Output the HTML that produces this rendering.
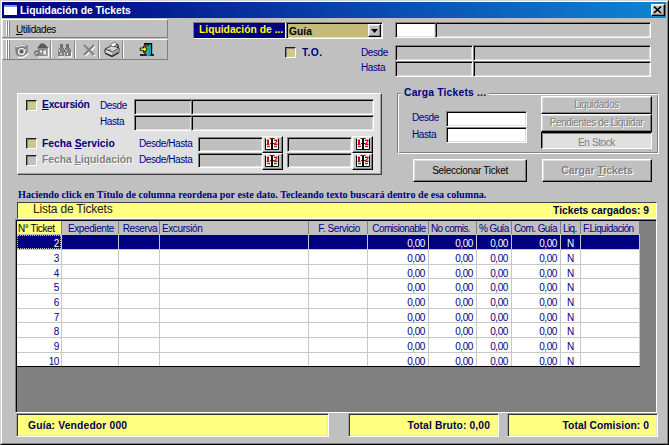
<!DOCTYPE html>
<html><head><meta charset="utf-8">
<style>
*{margin:0;padding:0;box-sizing:border-box}
html,body{width:669px;height:445px;overflow:hidden;background:#c0c0c0;font-family:"Liberation Sans",sans-serif;font-size:10px;letter-spacing:-0.4px;color:#000}
.a{position:absolute}
.t{position:absolute;white-space:nowrap;line-height:12px}
.sunk{position:absolute;border:1px solid;border-color:#808080 #fff #fff #808080;box-shadow:inset 1px 1px #000,inset -1px -1px #dfdfdf;background:#c0c0c0}
.rais{position:absolute;border:1px solid;border-color:#fff #000 #000 #fff;box-shadow:inset -1px -1px #808080,inset 1px 1px #dfdfdf;background:#c0c0c0}
.nv{color:#000080}
.b{font-weight:bold;font-size:10.3px;letter-spacing:0}
.dis{color:#808080;text-shadow:1px 1px #fff}
.chk{position:absolute;width:11px;height:11px;border:1px solid;border-color:#202020 #fff #fff #202020;box-shadow:inset 1px 1px #808080;background:#cfc88c}
.bt{position:absolute;border:1px solid;border-color:#fff #000 #000 #fff;box-shadow:inset -1px -1px #808080,inset 1px 1px #dfdfdf;background:#c0c0c0;text-align:center}
</style></head><body>
<!-- window frame -->
<div class="a" style="left:0;top:0;width:669px;height:445px;border:1px solid;border-color:#d4d4d4 #000 #000 #d4d4d4"></div>
<div class="a" style="left:1px;top:1px;width:667px;height:443px;border:1px solid;border-color:#fff #808080 #808080 #fff"></div>
<!-- title bar -->
<div class="a" style="left:2px;top:2px;width:664px;height:16px;background:linear-gradient(to right,#000080,#1084d0)"></div>
<div class="a" style="left:4px;top:5px;width:13px;height:10px;background:#fff;border-top:2px solid #6aa0e0"></div>
<div class="t b" style="left:20px;top:5px;color:#fff">Liquidación de Tickets</div>
<div class="rais" style="left:651px;top:4px;width:14px;height:12px"></div>
<svg class="a" style="left:651px;top:4px" width="14" height="12"><path d="M3 2.5l7 6.5M10 2.5l-7 6.5" stroke="#000" stroke-width="1.7"/></svg>

<!-- coolbar -->
<div class="a" style="left:2px;top:19px;width:166px;height:19px;border-top:1px solid #fff;border-left:1px solid #f0f0f0;border-right:1px solid #808080;border-bottom:1px solid #808080"></div>
<div class="a" style="left:2px;top:39px;width:166px;height:21px;border-top:1px solid #fff;border-left:1px solid #f0f0f0;border-right:1px solid #808080;border-bottom:1px solid #808080"></div>
<div class="a" style="left:6px;top:21px;width:4px;height:15px;border-left:1px solid #fff;border-right:1px solid #808080;box-shadow:inset 1px 0 #808080,inset -1px 0 #fff"></div>
<div class="a" style="left:6px;top:40px;width:4px;height:19px;border-left:1px solid #fff;border-right:1px solid #808080;box-shadow:inset 1px 0 #808080,inset -1px 0 #fff"></div>
<div class="t" style="left:16px;top:24px"><u>U</u>tilidades</div>
<!-- toolbar separators -->
<div class="a" style="left:50px;top:41px;width:2px;height:17px;border-left:1px solid #808080;border-right:1px solid #fff"></div>
<div class="a" style="left:74px;top:41px;width:2px;height:17px;border-left:1px solid #808080;border-right:1px solid #fff"></div>
<div class="a" style="left:98px;top:41px;width:2px;height:17px;border-left:1px solid #808080;border-right:1px solid #fff"></div>
<div class="a" style="left:122px;top:41px;width:2px;height:17px;border-left:1px solid #808080;border-right:1px solid #fff"></div>

<!-- toolbar icons -->
<svg class="a" style="left:14px;top:43px" width="16" height="16">
<path d="M4 14.5 L9 14.5 L14.5 10.5" stroke="#fff" stroke-width="1.2" fill="none"/>
<path d="M1 4.5 Q7 0 14 2.5 L13.5 5 Q14.5 9 12 11.5 L8 13.5 L4 13 Q1 11 1.5 7 Z" fill="#808080"/>
<path d="M2.5 4 Q7 1.5 12 3" stroke="#fff" stroke-width="1" fill="none"/>
<circle cx="7.5" cy="8.5" r="3" fill="none" stroke="#fff" stroke-width="1.1"/>
<circle cx="7.5" cy="8.5" r="1.2" fill="#505050"/>
<path d="M11 6.5 l1.5 1" stroke="#fff"/>
</svg>
<svg class="a" style="left:33px;top:42px" width="16" height="16">
<path d="M4 6.5 L7.5 1.5 L11 1.5 L15 5.5 L15 6.5 Z" fill="#5a5a5a"/>
<path d="M5 6.5 h9.5 v7.5 h-9.5z" fill="#8c8c8c"/>
<path d="M7 8.5 h2 v2 h-2z M10.5 8.5 h2.5 v4 h-2.5z" fill="#fff" opacity="0.85"/>
<path d="M5.5 15 h10 v-8.5" stroke="#fff" fill="none"/>
<path d="M0.8 9.5 l2.5 -1 l1.2 -3 l1.5 3 v5 l-3 0.8 l-2 -1.5z" fill="#7a7a7a"/>
<path d="M2.2 12.5 l2.2 -2.5 M3.8 6.5 l1 1.5" stroke="#fff" stroke-width="1"/>
</svg>
<svg class="a" style="left:57px;top:43px" width="16" height="15">
<path d="M3 1 h3 v4 h-3z M9 1 h3 v4 h-3z" fill="#707070"/>
<path d="M2 5 h5 v8 h-6 v-5z M8 5 h5 l1 3 v5 h-6z" fill="#808080"/>
<path d="M7 7 h1 v2 h-1z" fill="#505050"/>
<path d="M2.5 7 v1.5 M9 7 v1.5 M4 10 v2 M10.5 10 v2" stroke="#fff" stroke-width="1"/>
<path d="M1.5 14 h6 M8.5 14 h6 M14.5 9 v5" stroke="#fff" stroke-width="1"/>
</svg>
<svg class="a" style="left:81px;top:43px" width="16" height="14">
<path d="M3 2 l10 10 M13 2 l-10 10" stroke="#fff" stroke-width="2.2" transform="translate(1,1)"/>
<path d="M3 2 l10 10 M13 2 l-10 10" stroke="#808080" stroke-width="2.2"/>
</svg>
<svg class="a" style="left:104px;top:41px" width="17" height="16">
<path d="M1 8 L8 4.5 L15 7 L15 11 L8 15 L1 12 Z" fill="#d8d8d8" stroke="#303030" stroke-width="1"/>
<path d="M1 8 L8 11 L15 7" stroke="#505050" fill="none"/>
<path d="M8 11 L15 7.5 L15 11 L8 15Z" fill="#a0a0a0"/>
<path d="M6.5 3.5 L10.5 1 L13 3.5 L9 6 Z" fill="#fff" stroke="#606060" stroke-width="0.8"/>
<path d="M12 3 Q15 3.5 14 7" stroke="#202020" stroke-width="1.2" fill="none"/>
<rect x="4" y="8" width="1.5" height="1.2" fill="#e04040"/><rect x="5.8" y="8.6" width="1.5" height="1.2" fill="#40a040"/>
<path d="M1.5 12.5 L8 15.5 L15 11.5" stroke="#202020" stroke-width="1.2" fill="none"/>
</svg>
<svg class="a" style="left:139px;top:42px" width="16" height="16">
<rect x="5" y="2" width="7" height="10.5" fill="#505050"/>
<rect x="5" y="1" width="8" height="1.5" fill="#000"/>
<rect x="11.5" y="1" width="1.7" height="12" fill="#000"/>
<rect x="1" y="12.2" width="14" height="1.6" fill="#000"/>
<path d="M8 5 L12 1.8 L12 13 L8.3 14.8 Z" fill="#10a8a8"/>
<path d="M8 5 L8.3 14.8" stroke="#60d0d0" stroke-width="0.8"/>
<path d="M1.2 6 h3.3 v-2 l3.8 3.2 l-3.8 3.2 v-2 h-3.3 z" fill="#ffff00" stroke="#000" stroke-width="0.9"/>
</svg>
<!-- Liquidacion de label + combo -->
<div class="a" style="left:193px;top:22px;width:93px;height:17px;border:1px solid;border-color:#808080 #fff #fff #808080;background:#000080"></div>
<div class="t b" style="left:199px;top:24px;color:#ffff00">Liquidación de ...</div>
<div class="sunk" style="left:286px;top:22px;width:97px;height:17px;background:#c2bb7a"></div>
<div class="t b" style="left:289px;top:26px">Guía</div>
<div class="bt" style="left:368px;top:24px;width:13px;height:13px"></div>
<svg class="a" style="left:368px;top:24px" width="13" height="13"><path d="M3 5h7l-3.5 4z" fill="#000"/></svg>

<!-- top-right inputs -->
<div class="sunk" style="left:395px;top:22px;width:41px;height:16px;background:#fff"></div>
<div class="sunk" style="left:435px;top:22px;width:216px;height:16px"></div>
<div class="chk" style="left:285px;top:47px"></div>
<div class="t b nv" style="left:302px;top:47px;letter-spacing:0.4px">T.O.</div>
<div class="t nv" style="left:361px;top:47px">Desde</div>
<div class="t nv" style="left:361px;top:62px">Hasta</div>
<div class="sunk" style="left:395px;top:45px;width:78px;height:16px"></div>
<div class="sunk" style="left:473px;top:45px;width:178px;height:16px"></div>
<div class="sunk" style="left:395px;top:61px;width:78px;height:16px"></div>
<div class="sunk" style="left:473px;top:61px;width:178px;height:16px"></div>

<!-- left filter panel -->
<div class="a" style="left:17px;top:93px;width:365px;height:82px;background:#e0e0e0;border:1px solid;border-color:#fff #404040 #404040 #fff;box-shadow:inset -1px -1px #a0a0a0"></div>
<div class="chk" style="left:26px;top:100px"></div>
<div class="t b nv" style="left:42px;top:99px;letter-spacing:-0.25px"><u>E</u>xcursión</div>
<div class="t nv" style="left:100px;top:100px">Desde</div>
<div class="t nv" style="left:100px;top:116px">Hasta</div>
<div class="sunk" style="left:134px;top:99px;width:58px;height:16px"></div>
<div class="sunk" style="left:191px;top:99px;width:183px;height:16px"></div>
<div class="sunk" style="left:134px;top:115px;width:58px;height:16px"></div>
<div class="sunk" style="left:191px;top:115px;width:183px;height:16px"></div>
<div class="chk" style="left:26px;top:138px"></div>
<div class="t b nv" style="left:42px;top:138px">Fecha <u>S</u>ervicio</div>
<div class="t nv" style="left:139px;top:138px">Desde/Hasta</div>
<div class="chk" style="left:26px;top:155px;background:#c0c0c0"></div>
<div class="t b dis" style="left:42px;top:154px">Fecha <u>L</u>iquidación</div>
<div class="t nv" style="left:139px;top:154px">Desde/Hasta</div>
<div class="sunk" style="left:198px;top:137px;width:65px;height:15px"></div>
<div class="sunk" style="left:287px;top:137px;width:65px;height:15px"></div>
<div class="sunk" style="left:198px;top:153px;width:65px;height:15px"></div>
<div class="sunk" style="left:287px;top:153px;width:65px;height:15px"></div>
<div class="bt cal" style="left:262px;top:136px;width:21px;height:17px"></div>
<div class="bt cal" style="left:352px;top:136px;width:21px;height:17px"></div>
<div class="bt cal" style="left:262px;top:153px;width:21px;height:17px"></div>
<div class="bt cal" style="left:352px;top:153px;width:21px;height:17px"></div>

<svg class="a" style="left:265px;top:138px" width="14" height="12"><rect x="0" y="0" width="14" height="12" fill="#fff"/><path d="M0.5 0.5v11h13v-11" fill="none" stroke="#000"/><rect x="6" y="0" width="2" height="12" fill="#000"/><path d="M4.5 0.5h5M5 5.5h1M8 5.5h1" stroke="#303030"/><path d="M2 1.5h2v4.5h0.5v1h-3v-1h0.5v-3h-0.5z" fill="#e00000"/><path d="M9 1.5h3.5v2l-2 2h2v1.5h-3.5v-1.5l2-2v-0.5h-2z" fill="#e00000"/><path d="M2 8.5h3M9 8.5h3" stroke="#505050" stroke-width="1.5"/></svg>
<svg class="a" style="left:356px;top:138px" width="14" height="12"><rect x="0" y="0" width="14" height="12" fill="#fff"/><path d="M0.5 0.5v11h13v-11" fill="none" stroke="#000"/><rect x="6" y="0" width="2" height="12" fill="#000"/><path d="M4.5 0.5h5M5 5.5h1M8 5.5h1" stroke="#303030"/><path d="M2 1.5h2v4.5h0.5v1h-3v-1h0.5v-3h-0.5z" fill="#e00000"/><path d="M9 1.5h3.5v2l-2 2h2v1.5h-3.5v-1.5l2-2v-0.5h-2z" fill="#e00000"/><path d="M2 8.5h3M9 8.5h3" stroke="#505050" stroke-width="1.5"/></svg>
<svg class="a" style="left:265px;top:155px" width="14" height="12"><rect x="0" y="0" width="14" height="12" fill="#fff"/><path d="M0.5 0.5v11h13v-11" fill="none" stroke="#000"/><rect x="6" y="0" width="2" height="12" fill="#000"/><path d="M4.5 0.5h5M5 5.5h1M8 5.5h1" stroke="#303030"/><path d="M2 1.5h2v4.5h0.5v1h-3v-1h0.5v-3h-0.5z" fill="#e00000"/><path d="M9 1.5h3.5v2l-2 2h2v1.5h-3.5v-1.5l2-2v-0.5h-2z" fill="#e00000"/><path d="M2 8.5h3M9 8.5h3" stroke="#505050" stroke-width="1.5"/></svg>
<svg class="a" style="left:356px;top:155px" width="14" height="12"><rect x="0" y="0" width="14" height="12" fill="#fff"/><path d="M0.5 0.5v11h13v-11" fill="none" stroke="#000"/><rect x="6" y="0" width="2" height="12" fill="#000"/><path d="M4.5 0.5h5M5 5.5h1M8 5.5h1" stroke="#303030"/><path d="M2 1.5h2v4.5h0.5v1h-3v-1h0.5v-3h-0.5z" fill="#e00000"/><path d="M9 1.5h3.5v2l-2 2h2v1.5h-3.5v-1.5l2-2v-0.5h-2z" fill="#e00000"/><path d="M2 8.5h3M9 8.5h3" stroke="#505050" stroke-width="1.5"/></svg>
<!-- Carga Tickets group -->
<div class="a" style="left:397px;top:93px;width:262px;height:61px;border:1px solid;border-color:#808080 #fff #fff #808080;box-shadow:inset 1px 1px #fff,inset -1px -1px #808080"></div>
<div class="t b nv" style="left:401px;top:87px;background:#c0c0c0;padding:0 3px;letter-spacing:0.2px">Carga Tickets ...</div>
<div class="t nv" style="left:412px;top:112px">Desde</div>
<div class="t nv" style="left:412px;top:129px">Hasta</div>
<div class="sunk" style="left:446px;top:111px;width:81px;height:16px;background:#fff"></div>
<div class="sunk" style="left:446px;top:127px;width:81px;height:16px;background:#fff"></div>
<div class="bt t dis" style="left:541px;top:96px;width:111px;height:18px;line-height:16px">Liquidados</div>
<div class="bt t dis" style="left:541px;top:114px;width:111px;height:18px;line-height:16px">Pendientes de Liquidar</div>
<div class="t dis" style="left:541px;top:132px;width:111px;height:17px;line-height:16px;padding-top:2px;text-shadow:none;text-align:center;border:1px solid;border-color:#000 #fff #fff #000;box-shadow:inset 1px 1px #808080,inset -1px -1px #dfdfdf;background:#e0e0e0">En Stock</div>
<div class="bt t" style="left:413px;top:159px;width:114px;letter-spacing:-0.3px;height:23px;line-height:21px">Seleccionar Ticket</div>
<div class="bt t dis b" style="left:542px;top:159px;width:110px;height:23px;line-height:21px">Cargar <u>T</u>ickets</div>

<!-- hint -->
<div class="t nv" style="left:18px;top:189px;font-family:'Liberation Serif',serif;font-weight:bold;font-size:10.15px;letter-spacing:0">Haciendo click en Título de columna reordena por este dato. Tecleando texto buscará dentro de esa columna.</div>

<!-- yellow header bar -->
<div class="a" style="left:17px;top:202px;width:640px;height:17px;background:#ffff80;border:1px solid;border-color:#404040 #fff #fff #404040"></div>
<div class="t" style="left:33px;top:202px;font-size:12px;letter-spacing:-0.2px;line-height:14px;color:#202020">Lista de Tickets</div>
<div class="t b" style="left:540px;top:205px;width:109px;text-align:right;color:#000040">Tickets cargados: 9</div>

<!-- grid -->
<div class="a" style="left:15px;top:219px;width:642px;height:194px;background:#808080;border:1px solid;border-color:#808080 #fff #fff #808080;box-shadow:inset 1px 1px #000"></div>

<!-- grid contents -->
<div class="a" style="left:17px;top:235px;width:623px;height:132px;background:#fff"></div>
<div class="a" style="left:17px;top:221px;width:44px;height:14px;background:#ffff80"></div>
<div class="t" style="left:17px;top:222px;width:44px;height:13px;color:#000;padding-left:1px;line-height:14px;overflow:hidden;text-align:left;letter-spacing:-0.4px">N° Ticket</div>
<div class="a" style="left:61px;top:221px;width:1px;height:14px;background:#808080"></div>
<div class="a" style="left:62px;top:221px;width:1px;height:14px;background:#fff"></div>
<div class="a" style="left:62px;top:221px;width:56px;height:14px;background:#c0c0c0"></div>
<div class="t" style="left:62px;top:222px;width:56px;height:13px;color:#000080;padding-left:2px;line-height:14px;overflow:hidden;text-align:center;letter-spacing:-0.4px">Expediente</div>
<div class="a" style="left:118px;top:221px;width:1px;height:14px;background:#808080"></div>
<div class="a" style="left:119px;top:221px;width:1px;height:14px;background:#fff"></div>
<div class="a" style="left:119px;top:221px;width:40px;height:14px;background:#c0c0c0"></div>
<div class="t" style="left:119px;top:222px;width:40px;height:13px;color:#000080;padding-left:2px;line-height:14px;overflow:hidden;text-align:center;letter-spacing:-0.4px">Reserva</div>
<div class="a" style="left:159px;top:221px;width:1px;height:14px;background:#808080"></div>
<div class="a" style="left:160px;top:221px;width:1px;height:14px;background:#fff"></div>
<div class="a" style="left:160px;top:221px;width:148px;height:14px;background:#c0c0c0"></div>
<div class="t" style="left:160px;top:222px;width:148px;height:13px;color:#000080;padding-left:2px;line-height:14px;overflow:hidden;text-align:left;letter-spacing:-0.4px">Excursión</div>
<div class="a" style="left:308px;top:221px;width:1px;height:14px;background:#808080"></div>
<div class="a" style="left:309px;top:221px;width:1px;height:14px;background:#fff"></div>
<div class="a" style="left:309px;top:221px;width:58px;height:14px;background:#c0c0c0"></div>
<div class="t" style="left:309px;top:222px;width:58px;height:13px;color:#000080;padding-left:2px;line-height:14px;overflow:hidden;text-align:center;letter-spacing:-0.4px">F. Servicio</div>
<div class="a" style="left:367px;top:221px;width:1px;height:14px;background:#808080"></div>
<div class="a" style="left:368px;top:221px;width:1px;height:14px;background:#fff"></div>
<div class="a" style="left:368px;top:221px;width:60px;height:14px;background:#c0c0c0"></div>
<div class="t" style="left:368px;top:222px;width:60px;height:13px;color:#000080;padding-left:2px;line-height:14px;overflow:hidden;text-align:center;letter-spacing:-0.6px">Comisionable</div>
<div class="a" style="left:428px;top:221px;width:1px;height:14px;background:#808080"></div>
<div class="a" style="left:429px;top:221px;width:1px;height:14px;background:#fff"></div>
<div class="a" style="left:429px;top:221px;width:47px;height:14px;background:#c0c0c0"></div>
<div class="t" style="left:429px;top:222px;width:47px;height:13px;color:#000080;padding-left:2px;line-height:14px;overflow:hidden;text-align:left;letter-spacing:-0.6px">No comis.</div>
<div class="a" style="left:476px;top:221px;width:1px;height:14px;background:#808080"></div>
<div class="a" style="left:477px;top:221px;width:1px;height:14px;background:#fff"></div>
<div class="a" style="left:477px;top:221px;width:34px;height:14px;background:#c0c0c0"></div>
<div class="t" style="left:477px;top:222px;width:34px;height:13px;color:#000080;padding-left:2px;line-height:14px;overflow:hidden;text-align:left;letter-spacing:-0.6px">% Guía</div>
<div class="a" style="left:511px;top:221px;width:1px;height:14px;background:#808080"></div>
<div class="a" style="left:512px;top:221px;width:1px;height:14px;background:#fff"></div>
<div class="a" style="left:512px;top:221px;width:48px;height:14px;background:#c0c0c0"></div>
<div class="t" style="left:512px;top:222px;width:48px;height:13px;color:#000080;padding-left:2px;line-height:14px;overflow:hidden;text-align:left;letter-spacing:-0.6px">Com. Guía</div>
<div class="a" style="left:560px;top:221px;width:1px;height:14px;background:#808080"></div>
<div class="a" style="left:561px;top:221px;width:1px;height:14px;background:#fff"></div>
<div class="a" style="left:561px;top:221px;width:19px;height:14px;background:#c0c0c0"></div>
<div class="t" style="left:561px;top:222px;width:19px;height:13px;color:#000080;padding-left:2px;line-height:14px;overflow:hidden;text-align:left;letter-spacing:-0.6px">Liq.</div>
<div class="a" style="left:580px;top:221px;width:1px;height:14px;background:#808080"></div>
<div class="a" style="left:581px;top:221px;width:1px;height:14px;background:#fff"></div>
<div class="a" style="left:581px;top:221px;width:58px;height:14px;background:#c0c0c0"></div>
<div class="t" style="left:581px;top:222px;width:58px;height:13px;color:#000080;padding-left:2px;line-height:14px;overflow:hidden;text-align:left;letter-spacing:-0.6px">F.Liquidación</div>
<div class="a" style="left:639px;top:221px;width:1px;height:14px;background:#808080"></div>
<div class="a" style="left:17px;top:234px;width:623px;height:1px;background:#c0c0c0"></div>
<div class="a" style="left:17px;top:235px;width:623px;height:14px;background:#000080"></div>
<div class="a" style="left:17px;top:249px;width:623px;height:1px;background:#c8c8c8"></div>
<div class="a" style="left:17px;top:264px;width:623px;height:1px;background:#c8c8c8"></div>
<div class="a" style="left:17px;top:278px;width:623px;height:1px;background:#c8c8c8"></div>
<div class="a" style="left:17px;top:293px;width:623px;height:1px;background:#c8c8c8"></div>
<div class="a" style="left:17px;top:308px;width:623px;height:1px;background:#c8c8c8"></div>
<div class="a" style="left:17px;top:322px;width:623px;height:1px;background:#c8c8c8"></div>
<div class="a" style="left:17px;top:337px;width:623px;height:1px;background:#c8c8c8"></div>
<div class="a" style="left:17px;top:352px;width:623px;height:1px;background:#c8c8c8"></div>
<div class="a" style="left:17px;top:366px;width:623px;height:1px;background:#c8c8c8"></div>
<div class="a" style="left:61px;top:235px;width:1px;height:132px;background:#c8c8c8"></div>
<div class="a" style="left:118px;top:235px;width:1px;height:132px;background:#c8c8c8"></div>
<div class="a" style="left:159px;top:235px;width:1px;height:132px;background:#c8c8c8"></div>
<div class="a" style="left:308px;top:235px;width:1px;height:132px;background:#c8c8c8"></div>
<div class="a" style="left:367px;top:235px;width:1px;height:132px;background:#c8c8c8"></div>
<div class="a" style="left:428px;top:235px;width:1px;height:132px;background:#c8c8c8"></div>
<div class="a" style="left:476px;top:235px;width:1px;height:132px;background:#c8c8c8"></div>
<div class="a" style="left:511px;top:235px;width:1px;height:132px;background:#c8c8c8"></div>
<div class="a" style="left:560px;top:235px;width:1px;height:132px;background:#c8c8c8"></div>
<div class="a" style="left:580px;top:235px;width:1px;height:132px;background:#c8c8c8"></div>
<div class="a" style="left:639px;top:235px;width:1px;height:132px;background:#c8c8c8"></div>
<div class="a" style="left:17px;top:366px;width:623px;height:1px;background:#000"></div>
<div class="t" style="left:17px;top:237px;width:42px;text-align:right;color:#fff;line-height:14px">2</div>
<div class="t" style="left:368px;top:237px;width:57px;text-align:right;color:#fff;line-height:14px">0,00</div>
<div class="t" style="left:429px;top:237px;width:44px;text-align:right;color:#fff;line-height:14px">0,00</div>
<div class="t" style="left:477px;top:237px;width:31px;text-align:right;color:#fff;line-height:14px">0,00</div>
<div class="t" style="left:512px;top:237px;width:45px;text-align:right;color:#fff;line-height:14px">0,00</div>
<div class="t" style="left:561px;top:237px;width:19px;text-align:center;color:#fff;line-height:14px">N</div>
<div class="t" style="left:17px;top:252px;width:42px;text-align:right;color:#000080;line-height:14px">3</div>
<div class="t" style="left:368px;top:252px;width:57px;text-align:right;color:#000080;line-height:14px">0,00</div>
<div class="t" style="left:429px;top:252px;width:44px;text-align:right;color:#000080;line-height:14px">0,00</div>
<div class="t" style="left:477px;top:252px;width:31px;text-align:right;color:#000080;line-height:14px">0,00</div>
<div class="t" style="left:512px;top:252px;width:45px;text-align:right;color:#000080;line-height:14px">0,00</div>
<div class="t" style="left:561px;top:252px;width:19px;text-align:center;color:#000080;line-height:14px">N</div>
<div class="t" style="left:17px;top:267px;width:42px;text-align:right;color:#000080;line-height:14px">4</div>
<div class="t" style="left:368px;top:267px;width:57px;text-align:right;color:#000080;line-height:14px">0,00</div>
<div class="t" style="left:429px;top:267px;width:44px;text-align:right;color:#000080;line-height:14px">0,00</div>
<div class="t" style="left:477px;top:267px;width:31px;text-align:right;color:#000080;line-height:14px">0,00</div>
<div class="t" style="left:512px;top:267px;width:45px;text-align:right;color:#000080;line-height:14px">0,00</div>
<div class="t" style="left:561px;top:267px;width:19px;text-align:center;color:#000080;line-height:14px">N</div>
<div class="t" style="left:17px;top:281px;width:42px;text-align:right;color:#000080;line-height:14px">5</div>
<div class="t" style="left:368px;top:281px;width:57px;text-align:right;color:#000080;line-height:14px">0,00</div>
<div class="t" style="left:429px;top:281px;width:44px;text-align:right;color:#000080;line-height:14px">0,00</div>
<div class="t" style="left:477px;top:281px;width:31px;text-align:right;color:#000080;line-height:14px">0,00</div>
<div class="t" style="left:512px;top:281px;width:45px;text-align:right;color:#000080;line-height:14px">0,00</div>
<div class="t" style="left:561px;top:281px;width:19px;text-align:center;color:#000080;line-height:14px">N</div>
<div class="t" style="left:17px;top:296px;width:42px;text-align:right;color:#000080;line-height:14px">6</div>
<div class="t" style="left:368px;top:296px;width:57px;text-align:right;color:#000080;line-height:14px">0,00</div>
<div class="t" style="left:429px;top:296px;width:44px;text-align:right;color:#000080;line-height:14px">0,00</div>
<div class="t" style="left:477px;top:296px;width:31px;text-align:right;color:#000080;line-height:14px">0,00</div>
<div class="t" style="left:512px;top:296px;width:45px;text-align:right;color:#000080;line-height:14px">0,00</div>
<div class="t" style="left:561px;top:296px;width:19px;text-align:center;color:#000080;line-height:14px">N</div>
<div class="t" style="left:17px;top:311px;width:42px;text-align:right;color:#000080;line-height:14px">7</div>
<div class="t" style="left:368px;top:311px;width:57px;text-align:right;color:#000080;line-height:14px">0,00</div>
<div class="t" style="left:429px;top:311px;width:44px;text-align:right;color:#000080;line-height:14px">0,00</div>
<div class="t" style="left:477px;top:311px;width:31px;text-align:right;color:#000080;line-height:14px">0,00</div>
<div class="t" style="left:512px;top:311px;width:45px;text-align:right;color:#000080;line-height:14px">0,00</div>
<div class="t" style="left:561px;top:311px;width:19px;text-align:center;color:#000080;line-height:14px">N</div>
<div class="t" style="left:17px;top:325px;width:42px;text-align:right;color:#000080;line-height:14px">8</div>
<div class="t" style="left:368px;top:325px;width:57px;text-align:right;color:#000080;line-height:14px">0,00</div>
<div class="t" style="left:429px;top:325px;width:44px;text-align:right;color:#000080;line-height:14px">0,00</div>
<div class="t" style="left:477px;top:325px;width:31px;text-align:right;color:#000080;line-height:14px">0,00</div>
<div class="t" style="left:512px;top:325px;width:45px;text-align:right;color:#000080;line-height:14px">0,00</div>
<div class="t" style="left:561px;top:325px;width:19px;text-align:center;color:#000080;line-height:14px">N</div>
<div class="t" style="left:17px;top:340px;width:42px;text-align:right;color:#000080;line-height:14px">9</div>
<div class="t" style="left:368px;top:340px;width:57px;text-align:right;color:#000080;line-height:14px">0,00</div>
<div class="t" style="left:429px;top:340px;width:44px;text-align:right;color:#000080;line-height:14px">0,00</div>
<div class="t" style="left:477px;top:340px;width:31px;text-align:right;color:#000080;line-height:14px">0,00</div>
<div class="t" style="left:512px;top:340px;width:45px;text-align:right;color:#000080;line-height:14px">0,00</div>
<div class="t" style="left:561px;top:340px;width:19px;text-align:center;color:#000080;line-height:14px">N</div>
<div class="t" style="left:17px;top:355px;width:42px;text-align:right;color:#000080;line-height:14px">10</div>
<div class="t" style="left:368px;top:355px;width:57px;text-align:right;color:#000080;line-height:14px">0,00</div>
<div class="t" style="left:429px;top:355px;width:44px;text-align:right;color:#000080;line-height:14px">0,00</div>
<div class="t" style="left:477px;top:355px;width:31px;text-align:right;color:#000080;line-height:14px">0,00</div>
<div class="t" style="left:512px;top:355px;width:45px;text-align:right;color:#000080;line-height:14px">0,00</div>
<div class="t" style="left:561px;top:355px;width:19px;text-align:center;color:#000080;line-height:14px">N</div>
<div class="a" style="left:17px;top:235px;width:44px;height:14px;border:1px dotted #c0c0c0"></div>
<!-- status bars -->
<div class="a" style="left:16px;top:413px;width:313px;height:24px;background:#ffff80;border:1px solid;border-color:#a0a0a0 #fff #fff #a0a0a0;box-shadow:inset 1px 1px #303030,inset -1px -1px #e4e4e4"></div>
<div class="a" style="left:348px;top:413px;width:151px;height:24px;background:#ffff80;border:1px solid;border-color:#a0a0a0 #fff #fff #a0a0a0;box-shadow:inset 1px 1px #303030,inset -1px -1px #e4e4e4"></div>
<div class="a" style="left:507px;top:413px;width:151px;height:24px;background:#ffff80;border:1px solid;border-color:#a0a0a0 #fff #fff #a0a0a0;box-shadow:inset 1px 1px #303030,inset -1px -1px #e4e4e4"></div>
<div class="t b" style="left:28px;top:420px;letter-spacing:0.17px;color:#000050">Guía: Vendedor 000</div>
<div class="t b" style="left:360px;top:420px;width:130px;text-align:right;letter-spacing:0.12px;color:#000050">Total Bruto: 0,00</div>
<div class="t b" style="left:510px;top:420px;width:139px;text-align:right;letter-spacing:0.05px;color:#000050">Total Comision: 0</div>
</body></html>
